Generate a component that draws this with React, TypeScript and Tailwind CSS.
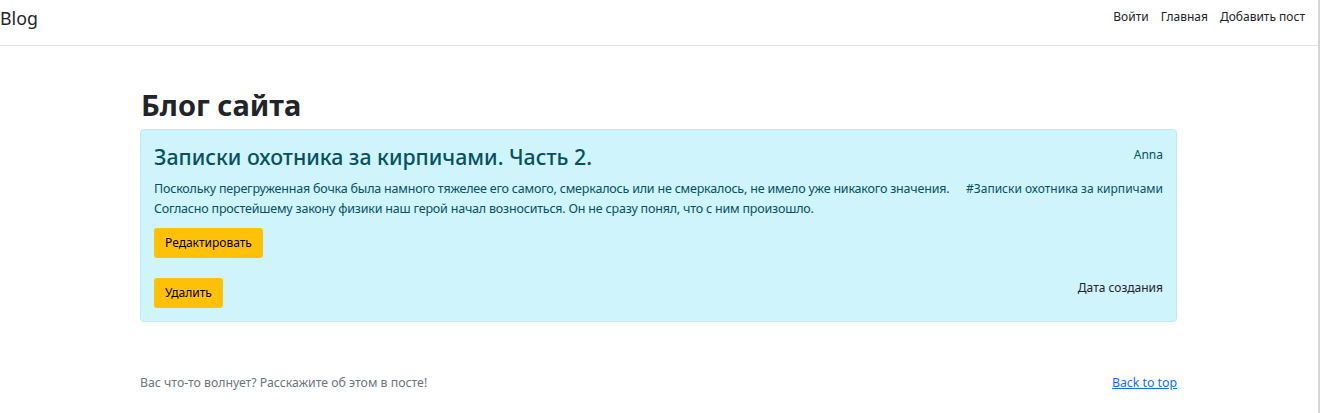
const font = { fontFamily: '"Noto Sans", "Open Sans", sans-serif' };

const navLinks = ['Войти', 'Главная', 'Добавить пост'];

export default function App() {
  return (
    <div className="w-[1320px] min-h-[413px] border-r-2 border-[#d4d4d4] bg-white text-[#212529]" style={font}>
      <header className="h-[46px] flex items-center justify-between border-b border-[#dee2e6] pr-[13px]">
        <a className="text-[17.8px] leading-none text-[#212529] -mt-[8px]">Blog</a>
        <nav className="flex items-center gap-[12px] text-[12px] text-[#212529] -mt-[12px]">
          {navLinks.map((l) => (
            <a key={l}>{l}</a>
          ))}
        </nav>
      </header>

      <main className="w-[1037px] ml-[140px] pt-[40px]">
        <h1 className="text-[29px] font-bold leading-[38px] mb-[5px] pl-[1px]">Блог сайта</h1>

        <div className="bg-[#cff4fc] border border-[#b6effb] rounded-[4px] px-[13px] pt-[12px] pb-[13px] text-[#055160]">
          <div className="flex justify-between items-start">
            <h5 className="text-[21.3px] font-medium leading-[30px]">Записки охотника за кирпичами. Часть 2.</h5>
            <span className="text-[12px] mt-[4px]">Anna</span>
          </div>
          <div className="flex justify-between gap-[16px] mt-[7px] text-[12.5px] leading-[19.5px]">
            <p className="tracking-[-0.2px] whitespace-nowrap">
              Поскольку перегруженная бочка была намного тяжелее его самого, смеркалось или не смеркалось, не имело уже никакого значения.
              <br />
              Согласно простейшему закону физики наш герой начал возноситься. Он не сразу понял, что с ним произошло.
            </p>
            <span className="whitespace-nowrap text-[12px]">#Записки охотника за кирпичами</span>
          </div>
          <button className="mt-[10px] h-[30px] px-[11px] bg-[#ffc107] rounded-[3px] text-[12px] text-black">
            Редактировать
          </button>
          <div className="flex justify-between items-center mt-[20px]">
            <button className="h-[30px] px-[11px] bg-[#ffc107] rounded-[3px] text-[12px] text-black">Удалить</button>
            <span className="text-[12px] text-[#212529] -mt-[10px]">Дата создания</span>
          </div>
        </div>

        <footer className="flex justify-between items-center mt-[52px]">
          <p className="text-[#6c757d] text-[12.3px]">Вас что-то волнует? Расскажите об этом в посте!</p>
          <a href="#" className="text-[#0d6efd] underline text-[12.3px]">Back to top</a>
        </footer>
      </main>
    </div>
  );
}
